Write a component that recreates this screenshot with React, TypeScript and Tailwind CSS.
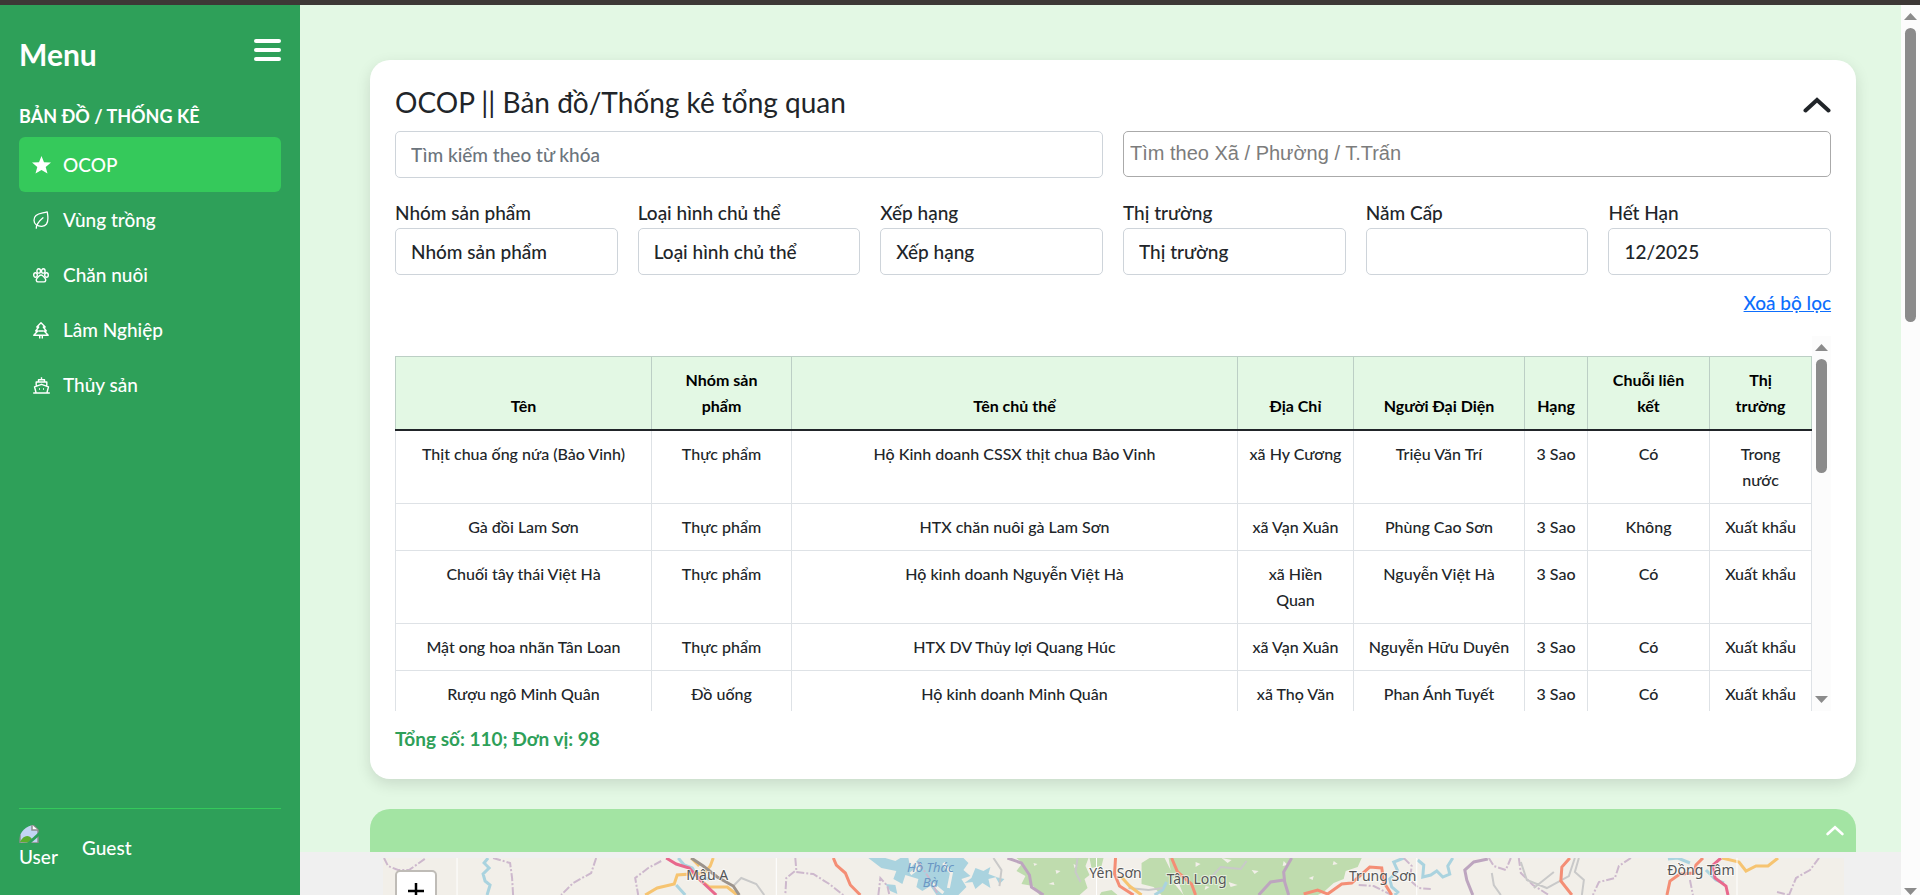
import React from "react";

const IconStar = () => (
  <svg width="19" height="18" viewBox="0 0 19 18" fill="currentColor">
    <path d="M9.500 0l2.500 6.200 7 .4-5.300 4.300 1.800 6.700-6-3.700-6 3.700 1.800-6.700L0 6.600l7-.4z" />
  </svg>
);

const IconHoja = () => (
  <svg width="16" height="18" viewBox="0 0 16 18" fill="none" stroke="currentColor" strokeWidth="1.300" strokeLinecap="round" strokeLinejoin="round">
    <path d="M14.200.8C10.500 2.300 6 2 3 4.600.4 7 .2 11.400 3.200 13.800c3.400 2.200 8.200 2 10.300-.8C16 9.500 14.800 4.500 14.200.8z" />
    <path d="M3.300 17.200C3.300 12.500 6.800 9.500 10 6.800" />
  </svg>
);

const IconHuella = () => (
  <svg width="16" height="15" viewBox="0 0 16 15" fill="none" stroke="currentColor" strokeWidth="1.400">
    <ellipse cx="5.700" cy="2.900" rx="1.800" ry="2.200" />
    <ellipse cx="10.300" cy="2.900" rx="1.800" ry="2.200" />
    <ellipse cx="2.500" cy="7" rx="1.800" ry="2.200" />
    <ellipse cx="13.500" cy="7" rx="1.800" ry="2.200" />
    <path d="M8 7c-2 0-2.300 1.700-3.800 2.900-1.700 1.600-.9 4 .8 4h6c1.700 0 2.500-2.400.8-4C10.300 8.700 10 7 8 7z" />
  </svg>
);

const IconArbol = () => (
  <svg width="16" height="17" viewBox="0 0 16 17" fill="none" stroke="currentColor" strokeWidth="1.400" strokeLinejoin="round">
    <path d="M8 .8L3.800 5h1.900L2.700 9h2.100L.8 13.300h14.400L11.200 9h2.100l-3-4h1.900zM5.500 9h5M6.700 13.500v3M9.300 13.500v3" />
  </svg>
);

const IconTau = () => (
  <svg width="17" height="17" viewBox="0 0 17 17" fill="none" stroke="currentColor" strokeWidth="1.400" strokeLinejoin="round">
    <path d="M8.500.3v2M5.500 5V2.700h6V5M3.200 8.500V5h10.600v3.500M3 15.500L1.500 9.800l7-2.500 7 2.500-1.500 5.700M.2 16h16.600M6 12h1M10 12h1" />
  </svg>
);

const ChevronUp = ({ className }: { className: string }) => (
  <svg className={className} viewBox="0 0 28 16" fill="none" stroke="currentColor" strokeWidth="4" strokeLinecap="round">
    <path d="M2.500 13.500L14 3l11.500 10.500" />
  </svg>
);

const menu = [
  { name: "OCOP", icon: <IconStar />, active: true },
  { name: "Vùng trồng", icon: <IconHoja /> },
  { name: "Chăn nuôi", icon: <IconHuella /> },
  { name: "Lâm Nghiệp", icon: <IconArbol /> },
  { name: "Thủy sản", icon: <IconTau /> },
];

const columns = [
  { name: "Tên", width: "w-[256px]" },
  { name: "Nhóm sản\nphẩm", width: "w-[140px]" },
  { name: "Tên chủ thể", width: "w-[446px]" },
  { name: "Địa Chỉ", width: "w-[116px]" },
  { name: "Người Đại Diện", width: "w-[171px]" },
  { name: "Hạng", width: "w-[63px]" },
  { name: "Chuỗi liên\nkết", width: "w-[122px]" },
  { name: "Thị\ntrường", width: "w-[102px]" },
];

const rows = [
  ["Thịt chua ống nứa (Bảo Vinh)", "Thực phẩm", "Hộ Kinh doanh CSSX thịt chua Bảo Vinh", "xã Hy Cương", "Triệu Văn Trí", "3 Sao", "Có", "Trong\nnước"],
  ["Gà đồi Lam Sơn", "Thực phẩm", "HTX chăn nuôi gà Lam Sơn", "xã Vạn Xuân", "Phùng Cao Sơn", "3 Sao", "Không", "Xuất khẩu"],
  ["Chuối tây thái Việt Hà", "Thực phẩm", "Hộ kinh doanh Nguyễn Việt Hà", "xã Hiền\nQuan", "Nguyễn Việt Hà", "3 Sao", "Có", "Xuất khẩu"],
  ["Mật ong hoa nhãn Tân Loan", "Thực phẩm", "HTX DV Thủy lợi Quang Húc", "xã Vạn Xuân", "Nguyễn Hữu Duyên", "3 Sao", "Có", "Xuất khẩu"],
  ["Rượu ngô Minh Quân", "Đồ uống", "Hộ kinh doanh Minh Quân", "xã Thọ Văn", "Phan Ánh Tuyết", "3 Sao", "Có", "Xuất khẩu"],
];

const selects = ["Nhóm sản phẩm", "Loại hình chủ thể", "Xếp hạng", "Thị trường"];

const field = "h-[47px] w-full appearance-none rounded-[5px] border border-[#ced4da] bg-white px-[15px] text-[19px] font-medium text-[#212529]";

const Sidebar = () => (
  <aside className="flex w-[300px] shrink-0 flex-col bg-[#2ea059] px-[19px] pt-[29px] text-[19px] font-medium text-white">
    <div className="flex h-10 items-center justify-between">
      <h2 className="text-[30px] font-bold">Menu</h2>
      <button aria-label="Menu" className="mb-2 flex w-[27px] flex-col gap-[5px]">
        <span className="h-1 w-full rounded-full bg-white" />
        <span className="h-1 w-full rounded-full bg-white" />
        <span className="h-1 w-full rounded-full bg-white" />
      </button>
    </div>
    <h3 className="mt-[28px] mb-[7px] text-[18px] leading-7 font-bold">BẢN ĐỒ / THỐNG KÊ</h3>
    <nav className="flex flex-col">
      {menu.map((item) => (
        <a
          key={item.name}
          href="#"
          className={`flex h-[55px] items-center gap-3 rounded-[6px] px-3 pt-px ${item.active ? "bg-[#35c95b]" : ""}`}
        >
          <span className="flex w-5 justify-center">{item.icon}</span>
          {item.name}
        </a>
      ))}
    </nav>
    <div className="mt-auto flex items-center gap-[23px] border-t border-[#35c95b] pt-4 pb-[24px]">
      <div className="w-10">
        <svg className="rounded-tl-[16px]" width="20" height="18" viewBox="0 0 20 18">
          <path d="M1 0h13l5 5v13H1z" fill="#c3d5f3" stroke="#8c8c8c" strokeWidth="1.500" />
          <path d="M1 17c3-7 9-8 12-3l-4 3.500z" fill="#5aae2e" />
          <path d="M13 0v5h6" fill="#fff" stroke="#8c8c8c" strokeWidth="1.500" />
          <path d="M8 18L20 7v4l-8 7z" fill="#2ea059" />
        </svg>
        <span className="block leading-7">User</span>
      </div>
      <span>Guest</span>
    </div>
  </aside>
);

const Scrollbar = ({ thumb, end }: { thumb: string; end: string }) => (
  <div className={`flex w-[19px] shrink-0 flex-col items-center justify-between bg-[#fcfcfc] pt-2 ${end}`}>
    <div className="flex flex-col items-center gap-2">
      <svg width="13" height="7" viewBox="0 0 13 7" fill="#8b8b8b"><path d="M6.500 0L13 7H0z" /></svg>
      <div className={`w-[11px] rounded-full bg-[#8b8b8b] ${thumb}`} />
    </div>
    <svg width="13" height="7" viewBox="0 0 13 7" fill="#8b8b8b"><path d="M6.500 7L13 0H0z" /></svg>
  </div>
);

const Filtros = () => (
  <>
    <div className="grid grid-cols-2 items-start gap-5">
      <input aria-label="Tìm kiếm theo từ khóa" placeholder="Tìm kiếm theo từ khóa" className={`${field} placeholder:text-[#6c757d]`} />
      <input
        aria-label="Tìm theo Xã / Phường / T.Trấn"
        placeholder="Tìm theo Xã / Phường / T.Trấn"
        className="h-[46px] w-full rounded-[5px] border border-[#aaa] px-[6px] pb-[2px] font-['Liberation_Sans',sans-serif] text-[20px] placeholder:text-[#7c7c7c]"
      />
    </div>
    <div className="mt-[20px] grid grid-cols-6 gap-5 font-medium">
      {selects.map((label) => (
        <label key={label} className="leading-[30px]">
          {label}
          <select className={`${field} block`}>
            <option>{label}</option>
          </select>
        </label>
      ))}
      <label className="leading-[30px]">
        Năm Cấp
        <input className={`${field} block`} />
      </label>
      <label className="leading-[30px]">
        Hết Hạn
        <input className={`${field} block`} defaultValue="12/2025" />
      </label>
    </div>
    <div className="mt-[14px] flex justify-end leading-7">
      <a href="#" className="font-medium text-[#0d6efd] underline">Xoá bộ lọc</a>
    </div>
  </>
);

const Tabla = () => (
  <div className="mt-[19px] flex h-[375px] overflow-hidden">
    <div className="grow overflow-hidden pt-5 pr-px">
      <table className="w-full table-fixed border-collapse text-center text-[16px] leading-[26px] font-medium">
        <thead>
          <tr className="border-b-2 border-[#212529] bg-[#e3f8e4] text-black">
            {columns.map((col) => (
              <th key={col.name} className={`border-x border-t border-[#bccfc5] px-2 py-[10px] align-bottom font-bold whitespace-pre-line ${col.width}`}>
                {col.name}
              </th>
            ))}
          </tr>
        </thead>
        <tbody>
          {rows.map((row) => (
            <tr key={row[0]}>
              {row.map((cell, i) => (
                <td key={i} className="border border-[#dee2e6] px-2 py-[10px] align-top whitespace-pre-line">
                  {cell}
                </td>
              ))}
            </tr>
          ))}
        </tbody>
      </table>
    </div>
    <Scrollbar thumb="h-[114px]" end="pb-2" />
  </div>
);

const Mapa = () => (
  <div className="relative mr-[57px] ml-[83px] overflow-hidden bg-[#f2efe9]">
    <svg className="block h-[37px] w-full" viewBox="0 0 1460 37" preserveAspectRatio="xMinYMin slice" fill="none">
      {/* bosque */}
      <g fill="#bfdcae">
        <path d="M633 0h72l-3 8 4 9-5 4 3 9-8 7h-40l-6-9-12-2 4-8-9-5 6-8z" />
        <path d="M706 0h14l-2 8-10 2zM758 5l8-5h15l6 12 4 14 9 11h-22l-8-8-12-3zM785 0h193l-4 9-12 4-2 8-10 4-10 9-6 3H800l-4-10-8-9zM718 34l10-2 6 5h-18z" />
      </g>
      <g fill="#f2efe9">
        <path d="M650 5l4 1-3 2zM672 12l5 1-4 3zM690 6l4 2-3 2zM665 26l5-2 1 3zM812 4l5 2-5 3zM838 0l10 2-4 3zM868 12l7 1-4 3zM900 3l4 4-5 1zM925 20l5-2-1 4zM950 3l4 3-5 1zM845 24l9 3-7 2zM822 28l4 1-5 3z" />
      </g>
      {/* lago */}
      <g fill="#aad3df">
        <path d="M485 0h17l10 3 5-3h8l2 10 9-10h44l5 5-5 7 7 6-9 3 5 8-8 8h-22l-6-9-8 5-6-4 2-8-13-4-3 9-9-5 3-8-15-3z" />
        <path d="M592 10l8 3 7-4-2 7 8 3-8 2 2 9-8-5-7 6-3-7-8 1 7-5zM502 26l10 1 2 9-7-3zM612 19l9 2-5 5z" />
      </g>
      <path d="M530 2l5 8-8 6M560 5l8 10-3 15M548 25l12 10" stroke="#f2efe9" strokeWidth="3" />
      <g stroke="#aad3df" strokeWidth="3">
        <path d="M105 0l-4 5 5 5-6 6 2 7 5 4-3 10M295 0l6 7 8 3 6 9 11 2M293 27l9 10M1020 0l-10 4 4 9-8 8 2 8 6 5-3 3M1034 2l6 5-1 12 8-2 6-4 6 6 7-3-2-8 5-8" />
        <path d="M1284 1l10-1 12 5M1322 12l10 10 8 3M783 24l-4 8-8 5" />
      </g>
      {/* ranh giới */}
      <g stroke="#cdb8cd" strokeWidth="2" strokeDasharray="8 2 2 2">
        <path d="M1 0l4 8 10 4h11l10-7 7-5M110 0l17 5 2 15 1 17M213 0l-5 15-18 10-12 12M278 3l-13 7-13 10 3 17M412 0l1 12-10 8-1 17M413 14l17 2 16 10 14 11M495 37l2-17 7 8 2 9M535 4l10 15 10 18" />
        <path d="M975 27l15 1 18 9M1020 0l8 8-2 14 9 8 12 1M1135 0l2 15 12 12 16 10M1247 0l-12 8-4 12-16 4-6 13M1306 22l3 15M1435 0l-9 12-14 8-7 17M1393 34l12 3M1105 0l5 8 12 4 5-12" />
      </g>
      <g stroke="#bda5bf" strokeWidth="3">
        <path d="M624 0l14 5 8 12 2 12 12 8M1104 1l-14 3-9 8 2 10 6 15M908 0l-8 14 1 10 4 13M900 22l-13 2-12 13" />
      </g>
      <g stroke="#c9c9c9" strokeWidth="2">
        <path d="M350 28l8-8 15 6 8 11M694 0l-2 14 5 10M610 0l8 12-2 16M745 30l20 2 14-2M827 20l10-11 20 2 6-8M1137 4l6 18 20 8 22-12 6-18M1195 0l-4 14 9 8-2 15M1108 15l2 12 7 10M1150 30l20-16" />
      </g>
      {/* đường */}
      <g stroke="#f6c471" strokeWidth="3">
        <path d="M330 0l-3 8-6 7-27 2-3 9-17 4-12 7M314 20l12 9 18 0 10 8M308 0l8 8M737 18l9 10 12 9M1338 0l17 4 7 9 10-5 12 0 10-8" />
      </g>
      <g stroke="#f48e75" strokeWidth="3">
        <path d="M450 0l3 7 9 8 5 12 10 10M732 0l-1 16 5 12 14 9M788 0l6 14 14 12 4 11M920 36l14-4 10 4 14-10 10-1 18-16 12 1 2 14 8 13M1186 0l-8 9-1 14 11 14M1283 37l3-14 10-7 14-1 2-8 7-7" />
      </g>
      <path d="M308 0l12 8 14 11 16 9 6 9" stroke="#9c938b" strokeWidth="3" />
      <path d="M283 0l10 6 13 4 12 13 15 14M1337 0l-8 7 2 13 11 8 2 9" stroke="#e8688c" strokeWidth="3" />
      {/* ô bản đồ */}
      <path d="M74 0v37M393 0v37M713 0v37M1033 0v37M1353 0v37" stroke="#fff" />
      <g className="font-['Noto_Sans',sans-serif]" fontSize="14" textAnchor="middle" fill="#555" stroke="#fff" strokeWidth="2" strokeOpacity="0.600" paintOrder="stroke">
        <text x="324" y="22">Mậu A</text>
        <text x="732" y="20">Yên Sơn</text>
        <text x="813" y="26">Tân Long</text>
        <text x="999" y="23">Trung Sơn</text>
        <text x="1317" y="17">Đồng Tâm</text>
      </g>
      <g className="font-['Noto_Sans',sans-serif] italic" fontSize="13" textAnchor="middle" fill="#6b97c4">
        <text x="547" y="14">Hồ Thác</text>
        <text x="547" y="29">Bà</text>
      </g>
    </svg>
    <button aria-label="Zoom in" className="absolute top-3 left-3 flex h-[42px] w-[42px] items-center justify-center rounded-[5px] border-2 border-[#bfbcb7] bg-white">
      <svg width="16" height="16" viewBox="0 0 16 16" stroke="#000" strokeWidth="2.500">
        <path d="M8 0v16M0 8h16" />
      </svg>
    </button>
  </div>
);

const App = () => {
  return (
    <div className="flex h-screen flex-col overflow-hidden border-t-[5px] border-[#3d3836] font-['Lato','Noto_Sans',sans-serif] text-[19px] text-[#212529]">
      <div className="flex min-h-0 grow">
        <Sidebar />
        <main className="min-w-0 grow overflow-hidden bg-[#e3f8e4]">
          <section className="mt-[55px] mr-[45px] ml-[70px] rounded-[20px] bg-white px-[25px] pt-[24px] pb-[26px] shadow-[0_5px_15px_rgba(0,0,0,0.12)]">
            <div className="mb-[11px] flex h-9 items-center justify-between">
              <h1 className="text-[28px]">OCOP || Bản đồ/Thống kê tổng quan</h1>
              <button aria-label="Thu gọn">
                <ChevronUp className="mt-[6px] h-4 w-7" />
              </button>
            </div>
            <Filtros />
            <Tabla />
            <p className="mt-[14px] leading-7 font-bold text-[#2ea059]">Tổng số: 110; Đơn vị: 98</p>
          </section>
          <div className="mt-[30px] mr-[45px] ml-[70px] flex h-[43px] items-center justify-end rounded-t-[20px] bg-[#a3e4a3] px-3 text-white">
            <button aria-label="Thu gọn bản đồ">
              <ChevronUp className="h-[11px] w-[18px]" />
            </button>
          </div>
          <div className="bg-[#f0f0f0] pt-[6px]">
            <Mapa />
          </div>
        </main>
        <Scrollbar thumb="h-[294px]" end="pb-0" />
      </div>
    </div>
  );
};

export default App;
